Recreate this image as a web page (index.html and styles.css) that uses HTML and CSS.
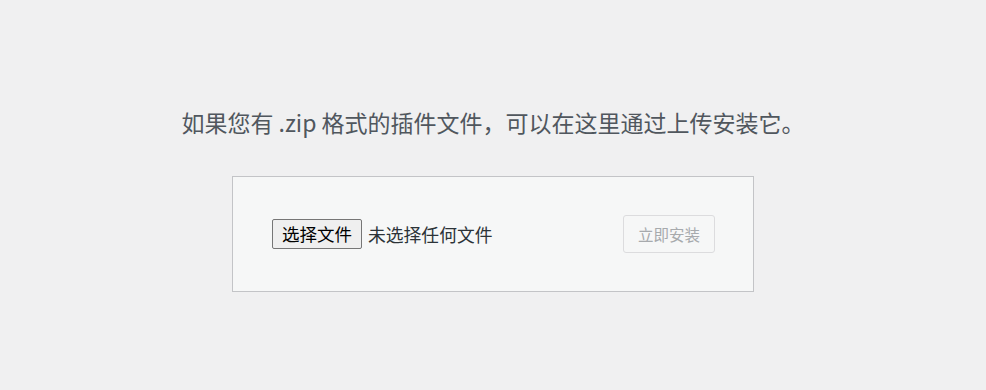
FILE: index.html
```html
<!DOCTYPE html>
<html lang="zh-CN">
  <head>
    <meta charset="UTF-8" />
    <meta name="viewport" content="width=device-width, initial-scale=1.0" />
    <title>上传插件</title>
    <link rel="stylesheet" href="styles.css">
  </head>
  <body>
    <div class="upload-plugin">
      <p class="install-help">如果您有 .zip 格式的插件文件，可以在这里通过上传安装它。</p>
      <form class="upload-form" method="post" enctype="multipart/form-data">
        <div class="file-field">
          <button type="button" class="file-btn">选择文件</button>
          <span class="file-name">未选择任何文件</span>
        </div>
        <button type="submit" class="install-btn" disabled>立即安装</button>
      </form>
    </div>
  </body>
</html>
```

FILE: styles.css
```css
* {
  margin: 0;
  padding: 0;
  box-sizing: border-box;
}

body {
  background: #f0f0f1;
  font-family: "Noto Sans CJK SC", "Noto Sans", sans-serif;
  color: #3c434a;
  height: 100vh;
  overflow: hidden;
}

.upload-plugin {
  display: flex;
  flex-direction: column;
  align-items: center;
  padding-top: 104px;
}

.install-help {
  font-size: 23px;
  line-height: 36px;
  color: #50575e;
  margin-bottom: 36px;
}

.upload-form {
  width: 522px;
  display: flex;
  align-items: center;
  justify-content: space-between;
  padding: 38px 38px 38px 39px;
  background: #f6f7f7;
  border: 1px solid #c3c4c7;
}

.file-field {
  display: flex;
  align-items: center;
  gap: 6px;
}

.file-btn {
  font-family: inherit;
  font-size: 17.5px;
  line-height: 26px;
  height: 30px;
  padding: 0 9px;
  color: #000;
  background: #efefef;
  border: 1px solid #767676;
  border-radius: 2px;
}

.file-name {
  font-size: 17.8px;
  color: #2c3338;
}

.install-btn {
  font-family: inherit;
  font-size: 15.5px;
  height: 38px;
  padding: 0 14px;
  color: #a7aaad;
  background: #f6f7f7;
  border: 1px solid #dcdcde;
  border-radius: 3px;
}
```
